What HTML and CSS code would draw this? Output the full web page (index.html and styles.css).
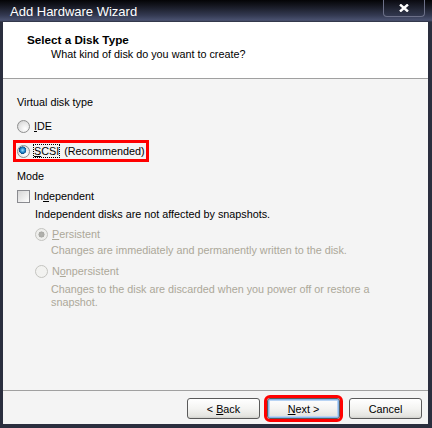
FILE: index.html
```html
<!DOCTYPE html>
<html>
<head lang="en">
    <meta charset="UTF-8">
    <title>Add Hardware Wizard</title>
    <link rel="stylesheet" href="styles.css">
</head>
<body>

<div class="window">
    <div class="titlebar">
        <span class="title">Add Hardware Wizard</span>
        <span class="close">
            <svg width="10" height="8" viewBox="0 0 10 8">
                <path d="M1 0.5 L9 7.5 M9 0.5 L1 7.5" stroke="#fff" stroke-width="2.4" fill="none"/>
            </svg>
        </span>
    </div>

    <div class="frame">
        <div class="header">
            <div class="heading">Select a Disk Type</div>
            <div class="subheading">What kind of disk do you want to create?</div>
        </div>

        <div class="content">
            <div class="group-label">Virtual disk type</div>
            <div class="option row-ide">
                <span class="radio"></span>
                <span class="label"><u>I</u>DE</span>
            </div>
            <div class="option highlight">
                <span class="radio checked"></span>
                <span class="label"><span class="focus"><u>S</u>CSI</span><span class="note">(Recommended)</span></span>
            </div>

            <div class="group-label row-mode">Mode</div>
            <div class="option row-indep">
                <span class="checkbox"></span>
                <span class="label">In<u>d</u>ependent</span>
            </div>
            <div class="desc row-desc">Independent disks are not affected by snapshots.</div>

            <div class="sub">
                <div class="option disabled row-persist">
                    <span class="radio checked"></span>
                    <span class="label"><u>P</u>ersistent</span>
                </div>
                <div class="hint row-hint1">Changes are immediately and permanently written to the disk.</div>
                <div class="option disabled row-nonpersist">
                    <span class="radio"></span>
                    <span class="label">N<u>o</u>npersistent</span>
                </div>
                <div class="hint row-hint2">Changes to the disk are discarded when you power off or restore a<br>snapshot.</div>
            </div>
        </div>

        <div class="footer">
            <button class="btn btn-back">&lt; <u>B</u>ack</button>
            <button class="btn btn-next"><u>N</u>ext &gt;</button>
            <button class="btn btn-cancel">Cancel</button>
        </div>
    </div>
</div>

</body>
</html>
```

FILE: styles.css
```css
* {
    padding: 0;
    margin: 0;
    box-sizing: border-box;
}
body {
    font: 10.8px "Liberation Sans", Arial, sans-serif;
    color: #000;
    background: #2c3040;
}
.window {
    width: 432px;
    height: 428px;
    display: flex;
    flex-direction: column;
}

/* title bar */
.titlebar {
    height: 22px;
    display: flex;
    align-items: flex-start;
    background: linear-gradient(#040406 0%, #14161f 25%, #343a52 70%, #4a5270 92%, #2a2e3e 100%);
}
.title {
    color: #fff;
    font: 13px/24px "Liberation Sans", Arial, sans-serif;
    padding-left: 10px;
}
.close {
    margin-left: auto;
    margin-right: 7px;
    width: 42px;
    height: 17px;
    display: flex;
    align-items: center;
    justify-content: center;
    border: 1px solid #6c7088;
    border-top: none;
    border-radius: 0 0 4px 4px;
    background: linear-gradient(#0a0a10, #242838 60%, #323850);
}

/* frame */
.frame {
    flex: 1;
    display: flex;
    flex-direction: column;
    border-left: 3px solid #2a2e3e;
    border-right: 4px solid #2a2e3e;
    border-bottom: 4px solid #2a2e3e;
    background: #f4f4f4;
}
.header {
    height: 57px;
    background: #fff;
    border-bottom: 1px solid #a0a0a0;
    padding: 11px 0 0 24px;
}
.heading {
    font-weight: bold;
    font-size: 11.7px;
    line-height: 14px;
}
.subheading {
    line-height: 15px;
    padding-left: 24px;
}

/* body */
.content {
    flex: 1;
    padding-left: 14px;
}
.group-label,
.desc,
.hint {
    line-height: 15px;
    height: 15px;
}
.group-label {
    margin-top: 16px;
}
.option {
    display: flex;
    align-items: center;
    height: 15px;
}
.option .label {
    margin-left: 4px;
    line-height: 15px;
}
.row-ide {
    margin-top: 9px;
}
.highlight {
    display: inline-flex;
    margin-top: 6px;
    margin-left: -4px;
    height: 22px;
    padding: 0 1px 0 1px;
    border: 3px solid #f00;
}
.focus {
    outline: 1px dotted #000;
    outline-offset: 0;
}
.note {
    margin-left: 5px;
}
.row-mode {
    margin-top: 7px;
}
.row-indep {
    margin-top: 5px;
}
.row-desc {
    margin-top: 3px;
    padding-left: 18px;
}
.sub {
    padding-left: 18px;
}
.row-persist {
    margin-top: 5px;
}
.hint {
    padding-left: 16px;
    color: #aca899;
}
.row-hint1 {
    margin-top: 1px;
}
.row-nonpersist {
    margin-top: 6px;
}
.row-hint2 {
    margin-top: 4px;
    height: auto;
    line-height: 13px;
}
.disabled {
    color: #aca899;
}

/* radio and checkbox */
.radio {
    width: 13px;
    height: 13px;
    border-radius: 50%;
    border: 1px solid #8e8f8f;
    background: radial-gradient(circle at 65% 70%, #ffffff 0%, #e6e6e6 55%, #c9c9c9 100%);
    flex: none;
}
.radio.checked {
    background:
        radial-gradient(circle at 42% 38%, #9fe0ff 0%, #2a8fd0 22%, #0b4f8a 38%, transparent 42%),
        radial-gradient(circle at 65% 70%, #ffffff 0%, #e6e6e6 55%, #c9c9c9 100%);
}
.disabled .radio {
    border-color: #c4c4c0;
    background: #f2f2f0;
}
.disabled .radio.checked {
    background:
        radial-gradient(circle, #b4b4b0 0%, #a8a8a4 36%, transparent 42%),
        #eeeeec;
}
.checkbox {
    width: 13px;
    height: 13px;
    border: 1px solid #8a8b90;
    background: linear-gradient(135deg, #d6d6d6 0%, #ececec 55%, #ffffff 100%);
    flex: none;
}

/* footer */
.footer {
    height: 34px;
    border-top: 1px solid #a0a0a0;
    display: flex;
    justify-content: flex-end;
    align-items: flex-start;
    padding: 7px 6px 0 0;
}
.btn {
    width: 73px;
    height: 21px;
    font: 10.8px "Liberation Sans", Arial, sans-serif;
    color: #000;
    border: 1px solid #5a5a5a;
    border-radius: 3px;
    background: linear-gradient(#ffffff 0%, #f4f4f2 50%, #e4e4e0 90%, #d0d0cc 100%);
}
.btn-next {
    margin-left: 7px;
    box-shadow: inset 0 0 0 1px #86b4e8, inset 0 0 0 2px #b8d4f4;
    outline: 3px solid #f00;
    outline-offset: 0;
}
.btn-cancel {
    margin-left: 9px;
}
```
